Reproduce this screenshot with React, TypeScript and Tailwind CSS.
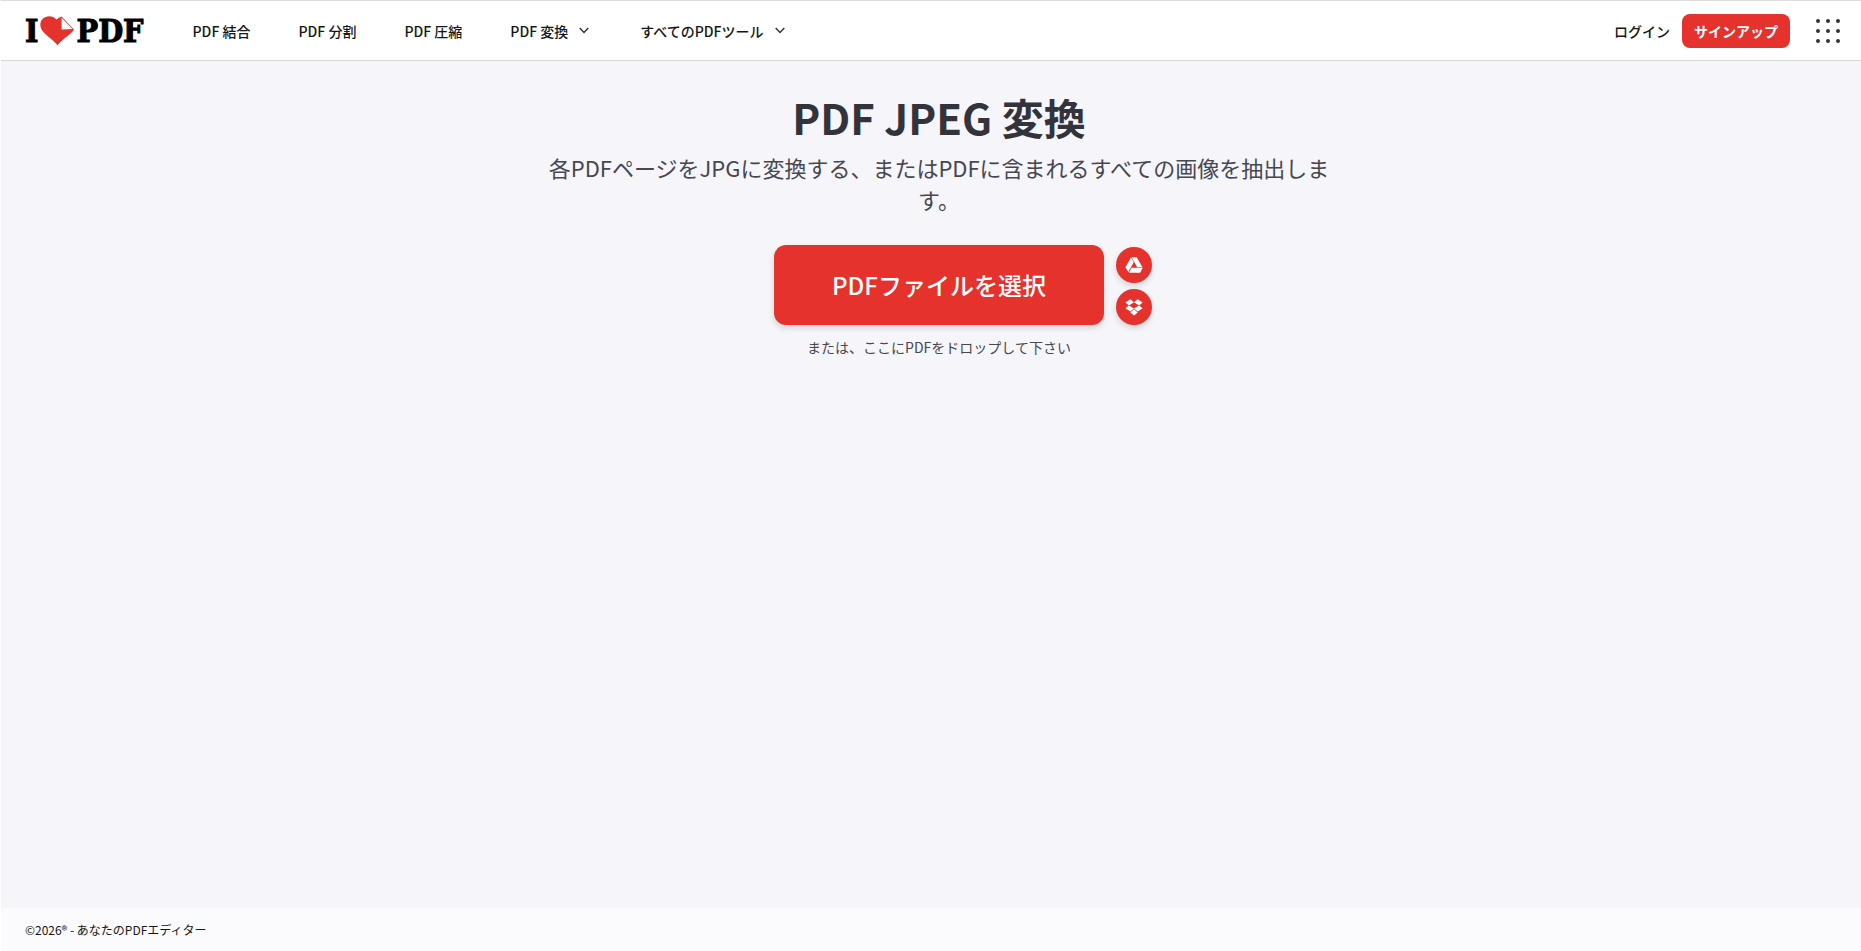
import React from 'react';

function Chevron() {
  return (
    <svg width="10" height="7" viewBox="0 0 10 7" fill="none" stroke="#33333b" strokeWidth="1.5" aria-hidden="true">
      <path d="M.7 1 5 5.4 9.3 1" />
    </svg>
  );
}

function Heart() {
  return (
    <svg width="34" height="30" viewBox="0 0 34 30" aria-hidden="true">
      <path
        d="M17.500 29.500C15 25.500 9 21.500 4.500 17.200C-.8 12.200-.6 6.400 2.600 3C6.600-1 12.900-.4 16.600 3.600Q17.600 2.600 18.900 1.700L21.600.4L34 13.400C31 18.500 20 24.500 17.500 29.500Z"
        fill="#e5322d"
      />
      <path d="M21.600 1.800 32.600 12.900 21.600 13.500Z" fill="#fff" />
    </svg>
  );
}

function DriveIcon() {
  return (
    <svg width="18" height="16" viewBox="0 0 18 16" fill="#fff" aria-hidden="true">
      <path d="M6 .6 8.700 5.200 3.300 15 .4 10.300Z" />
      <path d="M6.600.2H11.700L17.500 10.200H12.200Z" />
      <path d="M6.600 10.800H17.700L15.200 15.800H3.900Z" />
    </svg>
  );
}

function DropboxIcon() {
  return (
    <svg width="18" height="17" viewBox="0 0 18 17" fill="#fff" aria-hidden="true">
      <path d="M5.300.3 9 3.300 3.900 6.500 .4 3.600ZM12.700.3 17.600 3.600 14.100 6.500 9 3.300ZM.4 9.300 3.900 6.500 9 9.600 5.300 12.600ZM14.100 6.500 17.600 9.300 12.700 12.600 9 9.600Z" />
      <path d="M5.300 13.400 9 10.300 12.700 13.400 9 16.400Z" />
    </svg>
  );
}

const plainLinks = ['PDF 結合', 'PDF 分割', 'PDF 圧縮'];
const dots = [2, 12, 22];

export default function App() {
  return (
    <div
      lang="ja"
      className="flex min-h-screen flex-col border-t border-l border-t-[#dededf] border-l-white bg-[#f5f5fa] font-['Noto_Sans_CJK_JP',sans-serif] text-[#33333b]"
    >
      <header className="flex h-[60px] items-center border-b border-[#d6d6de] bg-white pr-[21px] pl-6 text-sm font-medium text-[#161616]">
        <a
          href="#"
          aria-label="I love PDF"
          className="mr-[49px] flex items-center gap-0.5 font-['DejaVu_Serif_Condensed','DejaVu_Serif',serif] text-[32px] leading-8 font-bold text-black [-webkit-text-stroke:1px_black]"
        >
          <span>I</span>
          <Heart />
          <span>PDF</span>
        </a>
        <nav className="flex items-center gap-12">
          {plainLinks.map((label) => (
            <a key={label} href="#">
              {label}
            </a>
          ))}
          <button type="button" className="flex items-center gap-[11px] pr-[3px]">
            PDF 変換
            <Chevron />
          </button>
          <button type="button" className="flex items-center gap-[11px]">
            すべてのPDFツール
            <Chevron />
          </button>
        </nav>
        <div className="ml-auto flex items-center">
          <a href="#" className="mr-3">
            ログイン
          </a>
          <a
            href="#"
            className="mr-6 flex h-[34px] items-center rounded-lg bg-[#e5322d] px-3 font-bold text-white"
          >
            サインアップ
          </a>
          <button type="button" aria-label="メニュー">
            <svg width="26" height="24" viewBox="-2 0 26 24" fill="#33333b" aria-hidden="true">
              {dots.map((y) => dots.map((x) => <circle key={`${x}-${y}`} cx={x} cy={y} r="2" />))}
            </svg>
          </button>
        </div>
      </header>

      <main className="flex flex-1 flex-col items-center pt-[30px] pl-4 text-center">
        <h1 className="text-[42px] leading-[52px] font-semibold">PDF JPEG 変換</h1>
        <p className="mt-2 max-w-[800px] text-[22px] leading-8 text-[#47474f]">
          各PDFページをJPGに変換する、またはPDFに含まれるすべての画像を抽出します。
        </p>
        <div className="mt-[30px] grid grid-cols-[36px_auto_36px] items-end gap-x-3">
          <button
            type="button"
            className="col-start-2 h-20 w-[330px] rounded-xl bg-[#e5322d] text-2xl font-medium text-white shadow-[0_3px_6px_rgba(0,0,0,0.14)]"
          >
            PDFファイルを選択
          </button>
          <div className="flex flex-col gap-1.5">
            <button
              type="button"
              aria-label="Google ドライブ"
              className="flex size-9 items-center justify-center rounded-full bg-[#e5322d] shadow-[0_3px_6px_rgba(0,0,0,0.14)]"
            >
              <DriveIcon />
            </button>
            <button
              type="button"
              aria-label="Dropbox"
              className="flex size-9 items-center justify-center rounded-full bg-[#e5322d] shadow-[0_3px_6px_rgba(0,0,0,0.14)]"
            >
              <DropboxIcon />
            </button>
          </div>
        </div>
        <p className="mt-2.5 text-sm leading-6 text-[#47474f]">または、ここにPDFをドロップして下さい</p>
      </main>

      <footer className="flex h-[43px] items-center bg-[#fbfbfd] px-6 text-xs text-[#161616]">
        <p>©2026® - あなたのPDFエディター</p>
      </footer>
    </div>
  );
}
